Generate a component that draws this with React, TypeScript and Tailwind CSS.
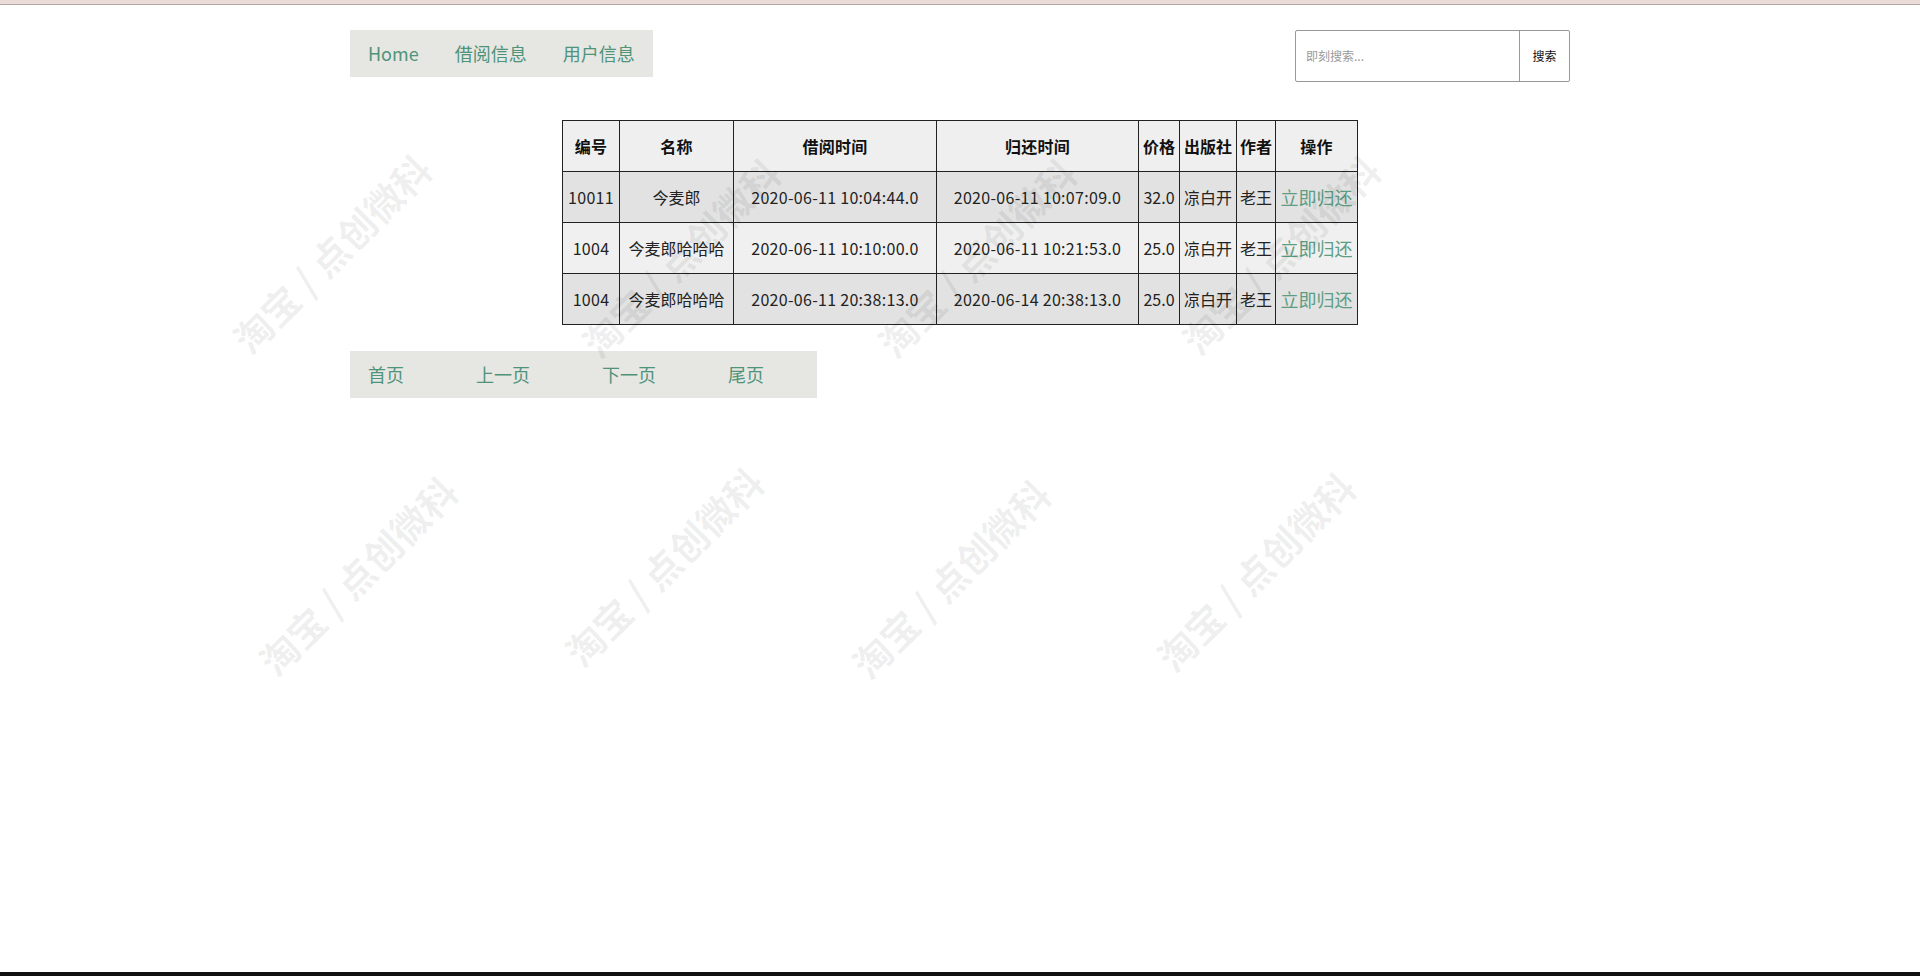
import React from "react";

const rows = [
  { id: "10011", name: "今麦郎", borrow: "2020-06-11 10:04:44.0", ret: "2020-06-11 10:07:09.0", price: "32.0", pub: "凉白开", author: "老王", bg: "bg-[#e2e2e2]" },
  { id: "1004", name: "今麦郎哈哈哈", borrow: "2020-06-11 10:10:00.0", ret: "2020-06-11 10:21:53.0", price: "25.0", pub: "凉白开", author: "老王", bg: "bg-[#f0f0f0]" },
  { id: "1004", name: "今麦郎哈哈哈", borrow: "2020-06-11 20:38:13.0", ret: "2020-06-14 20:38:13.0", price: "25.0", pub: "凉白开", author: "老王", bg: "bg-[#e2e2e2]" },
];

const marks = [
  "left-[331px] top-[253px]",
  "left-[680px] top-[257px]",
  "left-[976px] top-[257px]",
  "left-[1280px] top-[254px]",
  "left-[357px] top-[575px]",
  "left-[663px] top-[566px]",
  "left-[950px] top-[578px]",
  "left-[1255px] top-[571px]",
];

const cell = "border border-[#222] text-center whitespace-nowrap p-0";

export default function App() {
  return (
    <div
      className="relative h-[976px] w-full overflow-hidden bg-white flex flex-col text-[#222]"
      style={{ fontFamily: '"Noto Sans CJK SC", "Noto Sans", sans-serif' }}
    >
      <div className="h-[5px] bg-[#ecdcd7] border-b border-[#b2a6a4] shrink-0" />
      <div className="flex-1">
        <div className="mx-auto w-[1220px] pt-[25px]">
          <div className="flex items-start justify-between">
            <nav className="flex h-[47px] items-center bg-[#e6e6e3] text-[18px] text-[#4f9479]">
              <a className="px-[18px]">Home</a>
              <a className="px-[18px]">借阅信息</a>
              <a className="px-[18px]">用户信息</a>
            </nav>
            <div className="flex h-[52px] w-[275px] rounded-[2px] border border-[#999]">
              <div className="flex w-[224px] items-center pl-[10px] text-[12px] text-[#9a9a9a] border-r border-[#999]">
                即刻搜索...
              </div>
              <div className="flex flex-1 items-center justify-center text-[12px] text-[#111]">搜索</div>
            </div>
          </div>

          <div className="mt-[38px] flex justify-center">
            <table className="table-fixed border-collapse w-[795px] text-[16px] tracking-[0.3px]">
              <colgroup>
                <col className="w-[57px]" />
                <col className="w-[114px]" />
                <col className="w-[203px]" />
                <col className="w-[202px]" />
                <col className="w-[41px]" />
                <col className="w-[57px]" />
                <col className="w-[39px]" />
                <col className="w-[82px]" />
              </colgroup>
              <thead>
                <tr className="h-[51px] bg-[#efefef] font-bold text-[#111]">
                  <th className={cell}>编号</th>
                  <th className={cell}>名称</th>
                  <th className={cell}>借阅时间</th>
                  <th className={cell}>归还时间</th>
                  <th className={`${cell} tracking-normal`}>价格</th>
                  <th className={`${cell} tracking-normal`}>出版社</th>
                  <th className={`${cell} tracking-normal`}>作者</th>
                  <th className={cell}>操作</th>
                </tr>
              </thead>
              <tbody>
                {rows.map((r, i) => (
                  <tr key={i} className={`h-[51px] ${r.bg}`}>
                    <td className={cell}>{r.id}</td>
                    <td className={`${cell} tracking-normal`}>{r.name}</td>
                    <td className={cell}>{r.borrow}</td>
                    <td className={cell}>{r.ret}</td>
                    <td className={`${cell} tracking-normal`}>{r.price}</td>
                    <td className={`${cell} tracking-normal`}>{r.pub}</td>
                    <td className={`${cell} tracking-normal`}>{r.author}</td>
                    <td className={`${cell} tracking-normal text-[18px] text-[#5b9e85]`}>立即归还</td>
                  </tr>
                ))}
              </tbody>
            </table>
          </div>

          <div className="mt-[26px] flex h-[47px] w-[467px] items-center bg-[#e6e6e3] text-[18px] text-[#4f9479]">
            <a className="pl-[18px] pr-[54px]">首页</a>
            <a className="px-[18px] mr-[36px]">上一页</a>
            <a className="px-[18px] mr-[36px]">下一页</a>
            <a className="px-[18px]">尾页</a>
          </div>
        </div>
      </div>
      <div className="h-[4px] bg-[#111] shrink-0" />

      <div className="pointer-events-none absolute inset-0">
        {marks.map((m, i) => (
          <div
            key={i}
            className={`absolute ${m} -translate-x-1/2 -translate-y-1/2 -rotate-45 whitespace-nowrap text-[38px] font-bold text-[rgba(0,0,0,0.07)]`}
          >
            淘宝 / 点创微科
          </div>
        ))}
      </div>
    </div>
  );
}
